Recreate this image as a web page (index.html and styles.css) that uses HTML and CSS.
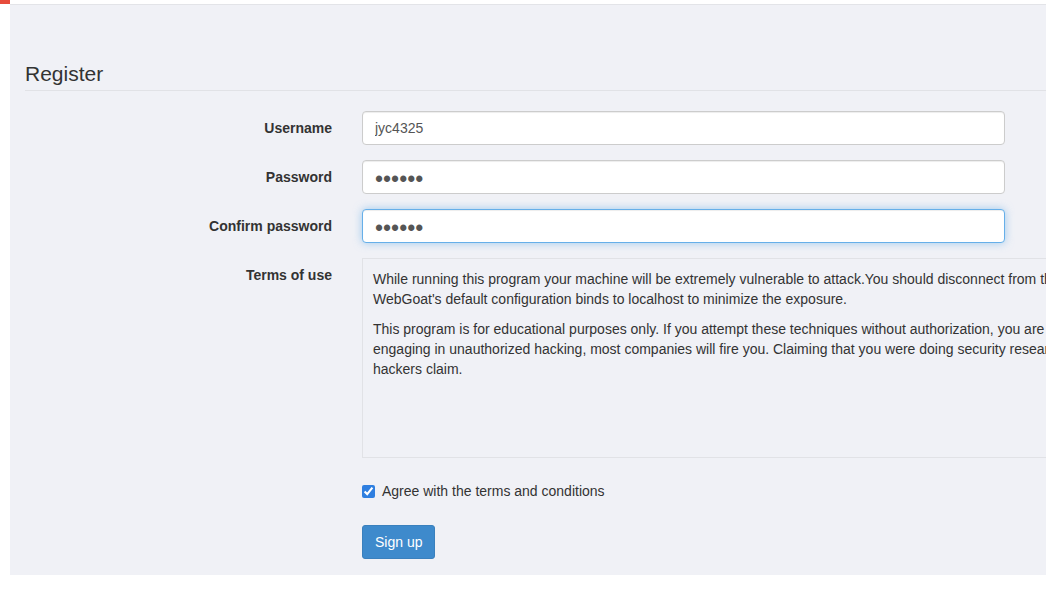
FILE: index.html
```html
<!DOCTYPE html>
<html>
<head>
<meta charset="utf-8">
<title>Register</title>
<link rel="stylesheet" href="styles.css">
</head>
<body>
<div class="topbar"><span class="topbar-mark"></span></div>
<div class="panel">
  <h3 class="page-header">Register</h3>
  <form class="form">
    <div class="row">
      <label class="row-label" for="username">Username</label>
      <input class="field" id="username" type="text" value="jyc4325">
    </div>
    <div class="row">
      <label class="row-label" for="password">Password</label>
      <input class="field field-secret" id="password" type="password" value="123456">
    </div>
    <div class="row">
      <label class="row-label" for="confirm">Confirm password</label>
      <input class="field field-secret field-focus" id="confirm" type="password" value="123456" autofocus>
    </div>
    <div class="row">
      <div class="row-label">Terms of use</div>
      <div class="terms">
        <p>While running this program your machine will be extremely vulnerable to attack.You should disconnect from the network while using this program. WebGoat's default configuration binds to localhost to minimize the exposure.</p>
        <p>This program is for educational purposes only. If you attempt these techniques without authorization, you are very likely to get caught. If you are caught engaging in unauthorized hacking, most companies will fire you. Claiming that you were doing security research will not work as that is the first thing all hackers claim.</p>
      </div>
    </div>
    <div class="row row-check">
      <div></div>
      <label class="check"><input type="checkbox" checked> Agree with the terms and conditions</label>
    </div>
    <div class="row row-submit">
      <div></div>
      <div><button type="button" class="btn">Sign up</button></div>
    </div>
  </form>
</div>
</body>
</html>
```
FILE: styles.css
```css
html, body {
  margin: 0;
  padding: 0;
  background: #ffffff;
  overflow: hidden;
}
body {
  font-family: "Liberation Sans", Arial, sans-serif;
  font-size: 14px;
  line-height: 20px;
  color: #333333;
}
.topbar {
  height: 4px;
  display: flex;
}
.topbar-mark {
  width: 10px;
  height: 4px;
  background: #e74c3c;
}
.panel {
  margin-left: 10px;
  background: #f0f1f6;
  border-top: 1px solid #e3e4e8;
  padding: 0 0 16px 15px;
  overflow: hidden;
}
.page-header {
  margin: 57px 0 20px 0;
  padding: 0 0 5px 0;
  font-size: 21px;
  line-height: 23px;
  font-weight: normal;
  color: #333333;
  border-bottom: 1px solid #e1e2e6;
}
.form {
  display: flex;
  flex-direction: column;
  gap: 15px;
}
.row {
  display: grid;
  grid-template-columns: 307px 643px;
  column-gap: 30px;
}
.row-label {
  text-align: right;
  font-weight: bold;
  padding-top: 7px;
}
.field {
  box-sizing: border-box;
  height: 34px;
  width: 643px;
  padding: 6px 12px;
  border: 1px solid #cccccc;
  border-radius: 4px;
  background: #ffffff;
  color: #555555;
  font-family: "Liberation Sans", Arial, sans-serif;
  font-size: 14px;
  box-shadow: inset 0 1px 1px rgba(0,0,0,.075);
  outline: none;
  caret-color: #333333;
}
.field-secret {
  font-size: 23px;
  padding: 4px 12px 0 12px;
  letter-spacing: 0;
}
.field-focus {
  border-color: #66afe9;
  box-shadow: inset 0 1px 1px rgba(0,0,0,.075), 0 0 8px rgba(102,175,233,.6);
}
.terms {
  box-sizing: border-box;
  width: 958px;
  height: 200px;
  padding: 10px;
  border: 1px solid #e1e2e6;
  background: #f0f1f6;
}
.terms p {
  margin: 0 0 10px 0;
}
.row-check .check {
  padding-top: 8px;
  display: flex;
  align-items: center;
  gap: 7px;
  font-weight: normal;
}
.check input {
  margin: 0;
  width: 13px;
  height: 13px;
  accent-color: #2f7fe0;
}
.row-submit {
  margin-top: 9px;
}
.btn {
  height: 34px;
  padding: 6px 12px;
  border: 1px solid #3a80bd;
  border-radius: 3px;
  background: #3e8acc;
  color: #ffffff;
  font-family: "Liberation Sans", Arial, sans-serif;
  font-size: 14px;
  line-height: 20px;
}
```
